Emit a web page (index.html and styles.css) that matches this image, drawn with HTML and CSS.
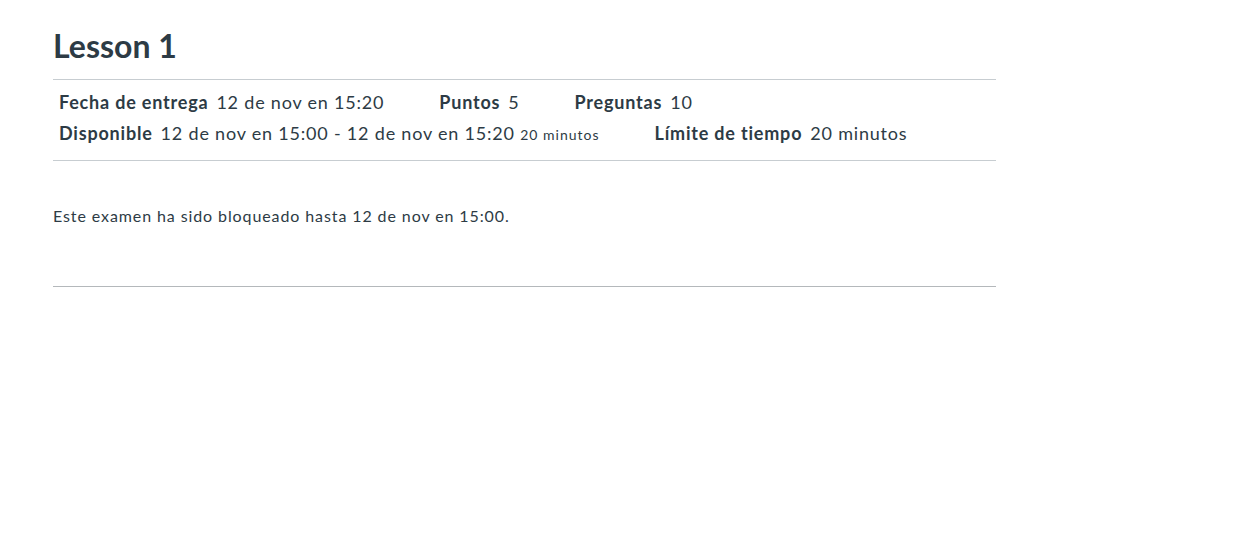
FILE: index.html
```html
<!DOCTYPE html>
<html lang="es">
<head>
<meta charset="utf-8">
<title>Lesson 1</title>
<link rel="stylesheet" href="styles.css">
</head>
<body>
<main class="quiz">
  <h1 class="quiz-title">Lesson 1</h1>
  <div class="quiz-meta">
    <div class="meta-row">
      <div class="meta-item"><span class="label">Fecha de entrega</span><span class="value">12 de nov en 15:20</span></div>
      <div class="meta-item"><span class="label">Puntos</span><span class="value">5</span></div>
      <div class="meta-item"><span class="label">Preguntas</span><span class="value">10</span></div>
    </div>
    <div class="meta-row">
      <div class="meta-item"><span class="label">Disponible</span><span class="value">12 de nov en 15:00 - 12 de nov en 15:20 <small class="note">20 minutos</small></span></div>
      <div class="meta-item"><span class="label">Límite de tiempo</span><span class="value">20 minutos</span></div>
    </div>
  </div>
  <p class="lock-note">Este examen ha sido bloqueado hasta 12 de nov en 15:00.</p>
  <hr class="end-rule">
</main>
</body>
</html>
```

FILE: styles.css
```css
html, body {
  margin: 0;
  padding: 0;
  background: #fff;
}
body {
  font-family: Lato, "Open Sans", sans-serif;
  color: #2d3b45;
}
.quiz {
  width: 943px;
  padding: 26px 0 0 53px;
}
.quiz-title {
  font-size: 32px;
  font-weight: 700;
  line-height: 40px;
  margin: 0 0 13px;
}
.quiz-meta {
  border-top: 1px solid #c7cdd1;
  border-bottom: 1px solid #c7cdd1;
  padding: 7px 6px 10px;
}
.meta-row {
  display: flex;
  gap: 55px;
  font-size: 18px;
  line-height: 31px;
  letter-spacing: 0.8px;
}
.label {
  font-weight: 700;
  margin-right: 8px;
}
.note {
  font-size: 14px;
  letter-spacing: 1px;
}
.lock-note {
  font-size: 16px;
  line-height: 20px;
  letter-spacing: 0.9px;
  margin: 45px 0 0;
}
.end-rule {
  border: 0;
  border-top: 1px solid #b4b8bb;
  margin: 60px 0 0;
}
```
